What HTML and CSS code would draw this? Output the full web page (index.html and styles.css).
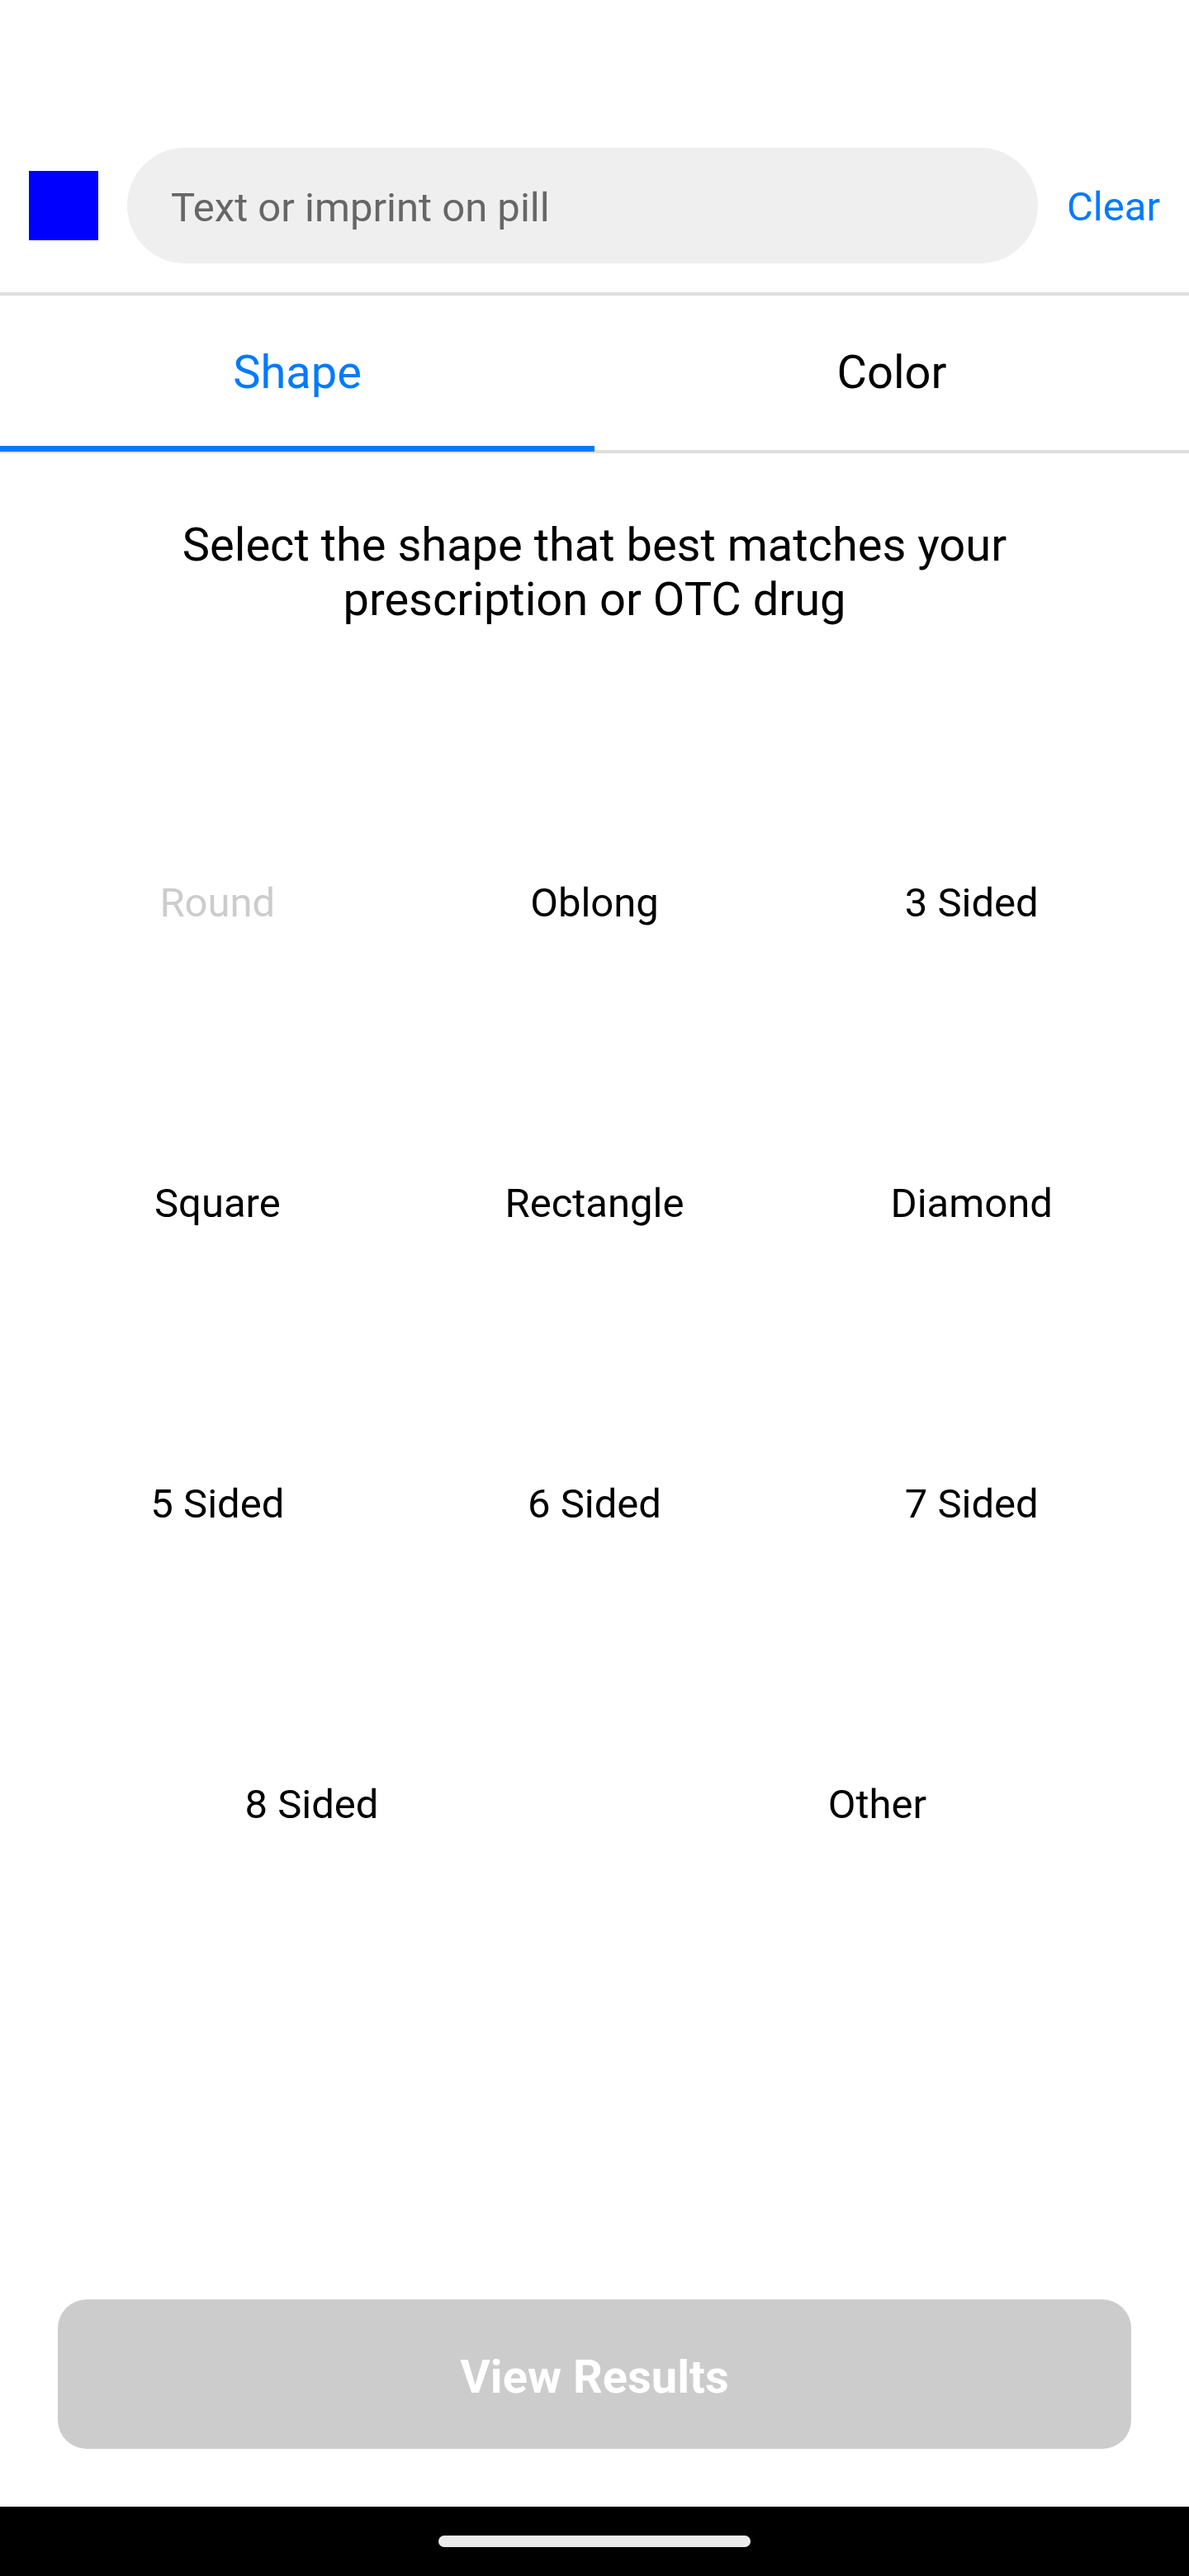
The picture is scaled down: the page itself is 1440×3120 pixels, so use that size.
FILE: index.html
```html
<!DOCTYPE html>
<html lang="en">
<head>
<meta charset="utf-8">
<meta name="viewport" content="width=device-width, initial-scale=1">
<title>Pill Identifier</title>
<link rel="stylesheet" href="styles.css">
</head>
<body>
<div class="screen">
  <header class="search-bar">
    <button class="back" type="button" aria-label="Back"></button>
    <input class="search" type="text" placeholder="Text or imprint on pill" aria-label="Text or imprint on pill">
    <button class="clear" type="button">Clear</button>
  </header>
  <nav class="tabs">
    <button class="tab tab-active" type="button">Shape</button>
    <button class="tab" type="button">Color</button>
  </nav>
  <main class="content">
    <p class="prompt">Select the shape that best matches your prescription or OTC drug</p>
    <div class="shapes">
      <div class="row">
        <button class="shape shape-selected" type="button">Round</button>
        <button class="shape" type="button">Oblong</button>
        <button class="shape" type="button">3 Sided</button>
      </div>
      <div class="row">
        <button class="shape" type="button">Square</button>
        <button class="shape" type="button">Rectangle</button>
        <button class="shape" type="button">Diamond</button>
      </div>
      <div class="row">
        <button class="shape" type="button">5 Sided</button>
        <button class="shape" type="button">6 Sided</button>
        <button class="shape" type="button">7 Sided</button>
      </div>
      <div class="row">
        <button class="shape" type="button">8 Sided</button>
        <button class="shape" type="button">Other</button>
      </div>
    </div>
  </main>
  <footer class="actions">
    <button class="results" type="button">View Results</button>
  </footer>
  <div class="system-nav"><span class="handle"></span></div>
</div>
</body>
</html>
```
FILE: styles.css
```css
* { box-sizing: border-box; }

body {
  margin: 0;
  background: #fff;
  color: #000;
  font-family: Roboto, sans-serif;
}

button {
  margin: 0;
  padding: 0;
  border: 0;
  background: none;
  color: inherit;
  font: inherit;
}

.screen {
  display: flex;
  flex-direction: column;
  min-height: 100vh;
  padding-top: 144px;
}

.search-bar {
  display: flex;
  align-items: center;
  gap: 35px;
  padding: 35px;
  border-bottom: 4px solid #dedede;
}

.back {
  width: 84px;
  height: 84px;
  background: #00f;
}

.search {
  flex: 1;
  min-width: 0;
  height: 140px;
  padding: 4px 53px 0;
  border: 0;
  border-radius: 70px;
  background: #efefef;
  color: #000;
  font: 49px/56px Roboto, sans-serif;
}

.search::placeholder { color: #666; opacity: 1; }

.clear {
  padding-top: 4px;
  color: #007aff;
  font-size: 49px;
  line-height: 56px;
}

.tabs {
  display: flex;
  border-bottom: 4px solid #dedede;
}

.tab {
  flex: 1;
  height: 189px;
  margin-bottom: -2px;
  padding-top: 4px;
  border-bottom: 7px solid transparent;
  font-size: 56px;
  line-height: 66px;
}

.tab-active {
  border-color: #007aff;
  color: #007aff;
}

.content {
  flex: 1;
  padding-top: 78px;
}

.prompt {
  max-width: 1160px;
  margin: 0 auto;
  font-size: 56px;
  line-height: 66px;
  text-align: center;
}

.shapes { padding: 153px 35px 0; }

.row { display: flex; }

.shape {
  flex: 1;
  height: 364px;
  font-size: 49px;
  line-height: 58px;
}

.shape-selected { color: #ccc; }

.actions { padding: 70px; }

.results {
  display: block;
  width: 100%;
  height: 181px;
  padding-top: 6px;
  border-radius: 35px;
  background: #ccc;
  color: #fff;
  font-size: 56px;
  font-weight: 700;
  line-height: 66px;
}

.system-nav {
  display: flex;
  align-items: center;
  justify-content: center;
  height: 84px;
  background: #000;
}

.handle {
  width: 378px;
  height: 14px;
  border-radius: 7px;
  background: #eaeaea;
}
```
